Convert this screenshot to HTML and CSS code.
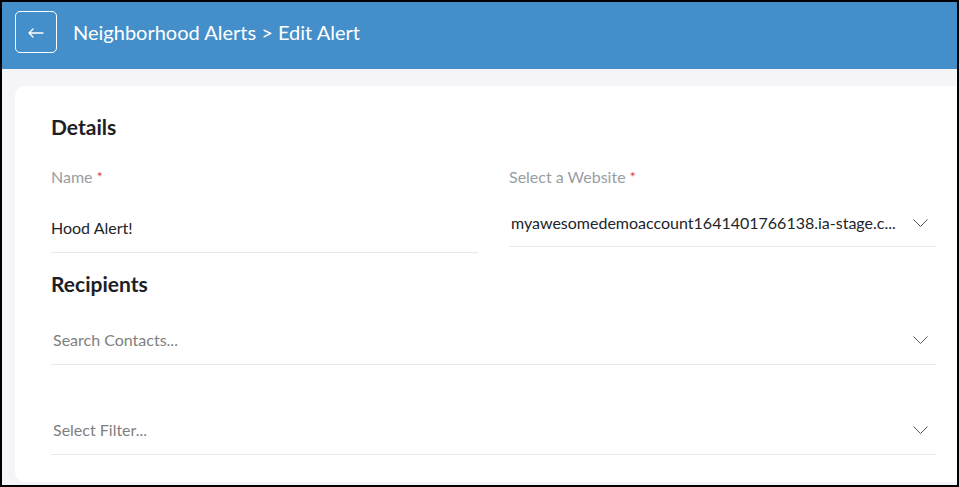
FILE: index.html
```html
<!DOCTYPE html>
<html lang="en">

<head>
    <meta charset="UTF-8">
    <meta name="viewport" content="width=device-width, initial-scale=1.0">
    <title>Edit Alert</title>
    <link rel="stylesheet" href="styles.css">
</head>

<body>
    <!-- Header bar -->
    <div class="topbar">
        <button class="back-btn" type="button" aria-label="Back">
            <svg width="16" height="10" viewBox="0 0 16 10">
                <path d="M1 5 H15 M5 1 L1 5 L5 9" fill="none" stroke="#fff" stroke-width="1.3" stroke-linecap="round" stroke-linejoin="round"/>
            </svg>
        </button>
        <div class="topbar-title">Neighborhood Alerts &gt; Edit Alert</div>
    </div>

    <!-- Main content -->
    <div class="main">
        <div class="card">
            <h2 class="section-title">Details</h2>

            <div class="row">
                <div class="col">
                    <div class="field-label">Name <span class="req">*</span></div>
                    <div class="text-field">Hood Alert!</div>
                </div>
                <div class="col">
                    <div class="field-label">Select a Website <span class="req">*</span></div>
                    <div class="select-field website">
                        <span class="select-value">myawesomedemoaccount1641401766138.ia-stage.c...</span>
                        <svg class="chevron" width="15" height="8" viewBox="0 0 15 8">
                            <path d="M0.5 0.5 L7.5 7.5 L14.5 0.5" fill="none" stroke="#555" stroke-width="1"/>
                        </svg>
                    </div>
                </div>
            </div>

            <h2 class="section-title recipients">Recipients</h2>

            <div class="select-field contacts">
                <span class="select-value placeholder">Search Contacts...</span>
                <svg class="chevron" width="15" height="8" viewBox="0 0 15 8">
                    <path d="M0.5 0.5 L7.5 7.5 L14.5 0.5" fill="none" stroke="#555" stroke-width="1"/>
                </svg>
            </div>

            <div class="select-field filter">
                <span class="select-value placeholder">Select Filter...</span>
                <svg class="chevron" width="15" height="8" viewBox="0 0 15 8">
                    <path d="M0.5 0.5 L7.5 7.5 L14.5 0.5" fill="none" stroke="#555" stroke-width="1"/>
                </svg>
            </div>
        </div>
    </div>
</body>

</html>
```

FILE: styles.css
```css
/* Page */
html,
body {
    height: 100%;
}

body {
    margin: 0;
    box-sizing: border-box;
    border: 2px solid #000;
    font-family: Lato, "Open Sans", sans-serif;
    background-color: #f5f5f9;
    color: #212529;
    overflow: hidden;
}

/* Header bar */
.topbar {
    background-color: #448fca;
    height: 67px;
    box-sizing: border-box;
    padding: 9px 13px 16px;
    display: flex;
    align-items: center;
}

.back-btn {
    width: 42px;
    height: 42px;
    padding: 0;
    background: transparent;
    border: 1px solid #fff;
    border-radius: 5px;
    display: flex;
    align-items: center;
    justify-content: center;
    cursor: pointer;
}

.back-btn svg {
    margin-top: 1px;
}

.topbar-title {
    margin-left: 16px;
    color: #fff;
    font-size: 20px;
    line-height: 24px;
}

/* Card */
.main {
    padding: 17px 0 0 13px;
}

.card {
    background-color: #fff;
    border-radius: 10px 0 0 10px;
    padding: 27px 21px 27px 36px;
}

.section-title {
    margin: 0;
    font-size: 21px;
    line-height: 28px;
    font-weight: 700;
    color: #1d2125;
}

.section-title.recipients {
    margin-top: 17px;
}

/* Fields */
.row {
    display: flex;
    gap: 31px;
    margin-top: 26px;
}

.col {
    flex: 1;
    min-width: 0;
}

.field-label {
    font-size: 16px;
    line-height: 20px;
    color: #999ea3;
}

.req {
    color: #e0383e;
    font-size: 14px;
    line-height: 1;
    vertical-align: 1px;
}

.text-field {
    margin-top: 31px;
    padding-bottom: 14px;
    font-size: 16px;
    line-height: 20px;
    border-bottom: 1px solid #e8e8e8;
}

.select-field {
    display: flex;
    align-items: center;
    padding: 0 8px 14px 2px;
    font-size: 16px;
    line-height: 20px;
    border-bottom: 1px solid #e8e8e8;
}

.select-field.website {
    margin-top: 26px;
    padding-bottom: 13px;
}

.select-field.contacts {
    margin-top: 32px;
}

.select-field.filter {
    margin-top: 55px;
    padding-bottom: 14px;
}

.select-value {
    flex: 1;
    min-width: 0;
    white-space: nowrap;
    overflow: hidden;
    margin-right: 16px;
}

.placeholder {
    color: #808080;
}

.chevron {
    flex-shrink: 0;
}
```
